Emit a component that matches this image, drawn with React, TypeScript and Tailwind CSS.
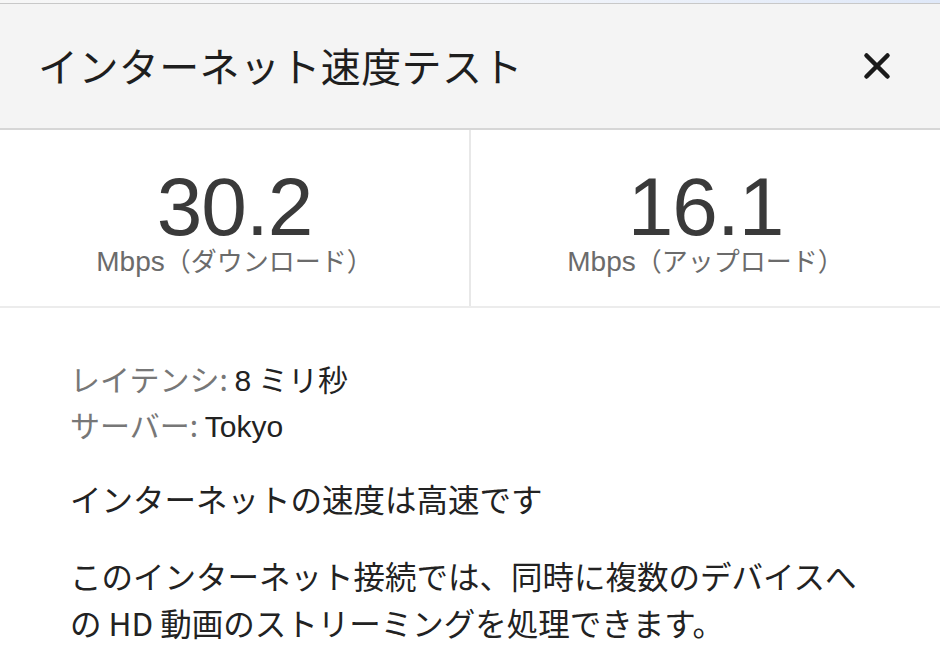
import { X } from "lucide-react";

const jp = { fontFamily: '"Noto Sans CJK JP", "Noto Sans", sans-serif' };
const latin = { fontFamily: '"Liberation Sans", "Noto Sans CJK JP", Arial, sans-serif' };

function Stat({ value, label, divider }: { value: string; label: string; divider?: boolean }) {
  return (
    <div
      className={`flex-1 flex flex-col items-center pt-[36px] ${
        divider ? "border-r-2 border-[#e8e8e8]" : ""
      }`}
    >
      <div className="text-[82px] leading-[82px] text-[#3a3a3a] tracking-[-1px]" style={latin}>
        {value}
      </div>
      <div className="text-[26px] leading-[24px] text-[#6b6b6b]" style={jp}>
        <span className="text-[28px]" style={latin}>
          Mbps
        </span>
        {label}
      </div>
    </div>
  );
}

export default function App() {
  return (
    <div className="w-[940px] h-[656px] overflow-hidden bg-white" style={jp}>
      <div className="h-[3px] bg-gradient-to-r from-[#f6f6f6] via-[#f4f6fa] to-[#dfe8f8] border-b border-[#c8c8c8] box-content" />
      <div className="h-[126px] bg-[#f4f4f4] border-b-2 border-[#d6d6d6] flex items-center justify-between pl-[38px] pr-[42px]">
        <h1 className="text-[40px] leading-none text-[#1e1e1e] pb-[2px] tracking-[0.4px]">インターネット速度テスト</h1>
        <X className="w-[42px] h-[42px] text-[#1a1a1a]" strokeWidth={2.6} />
      </div>
      <div className="h-[178px] flex border-b-2 border-[#ececec]">
        <Stat value="30.2" label="（ダウンロード）" divider />
        <Stat value="16.1" label="（アップロード）" />
      </div>
      <div className="pl-[70px] pr-[70px] pt-[47px] text-[30px] text-[#222]">
        <div className="h-[46px] leading-[46px] overflow-visible">
          <span className="text-[#777]">レイテンシ:</span>{" "}
          <span style={latin}>8</span> ミリ秒
        </div>
        <div className="h-[46px] leading-[46px] overflow-visible">
          <span className="text-[#777]">サーバー:</span>{" "}
          <span style={latin}>Tokyo</span>
        </div>
        <p className="leading-[46px] mt-[28px] text-[31.5px]">インターネットの速度は高速です</p>
        <p className="leading-[47px] mt-[31px] text-[31.5px]">
          このインターネット接続では、同時に複数のデバイスへの HD 動画のストリーミングを処理できます。
        </p>
      </div>
    </div>
  );
}
